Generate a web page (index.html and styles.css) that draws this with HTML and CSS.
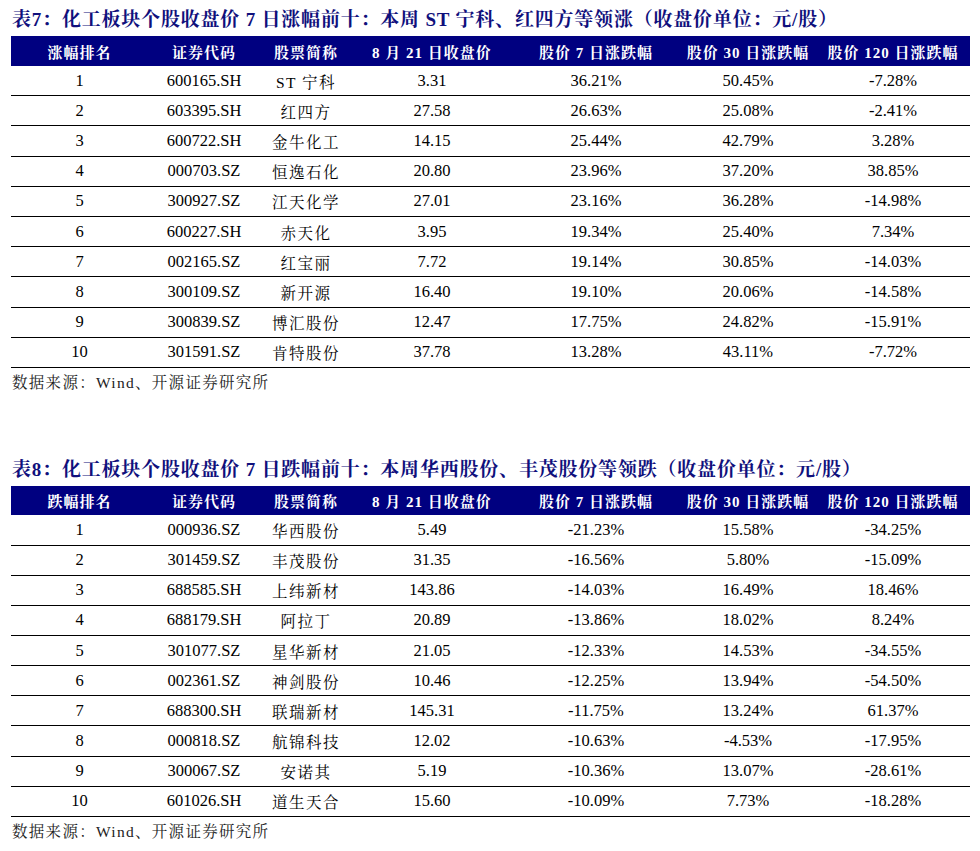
FILE: index.html
```html
<!DOCTYPE html>
<html lang="zh-CN">
<head>
<meta charset="utf-8">
<title>化工板块个股收盘价</title>
<link rel="stylesheet" href="styles.css">
</head>
<body>
<div class="page">
  <section class="block first">
    <h2 class="title">表7：化工板块个股收盘价 7 日涨幅前十：本周 ST 宁科、红四方等领涨（收盘价单位：元/股）</h2>
    <div class="table">
      <div class="row head">
        <div class="cell">涨幅排名</div><div class="cell">证券代码</div><div class="cell">股票简称</div><div class="cell">8 月 21 日收盘价</div><div class="cell">股价 7 日涨跌幅</div><div class="cell">股价 30 日涨跌幅</div><div class="cell">股价 120 日涨跌幅</div>
      </div>
      <div class="row"><div class="cell">1</div><div class="cell">600165.SH</div><div class="cell cn">ST 宁科</div><div class="cell">3.31</div><div class="cell">36.21%</div><div class="cell">50.45%</div><div class="cell">-7.28%</div></div>
      <div class="row"><div class="cell">2</div><div class="cell">603395.SH</div><div class="cell cn">红四方</div><div class="cell">27.58</div><div class="cell">26.63%</div><div class="cell">25.08%</div><div class="cell">-2.41%</div></div>
      <div class="row"><div class="cell">3</div><div class="cell">600722.SH</div><div class="cell cn">金牛化工</div><div class="cell">14.15</div><div class="cell">25.44%</div><div class="cell">42.79%</div><div class="cell">3.28%</div></div>
      <div class="row"><div class="cell">4</div><div class="cell">000703.SZ</div><div class="cell cn">恒逸石化</div><div class="cell">20.80</div><div class="cell">23.96%</div><div class="cell">37.20%</div><div class="cell">38.85%</div></div>
      <div class="row"><div class="cell">5</div><div class="cell">300927.SZ</div><div class="cell cn">江天化学</div><div class="cell">27.01</div><div class="cell">23.16%</div><div class="cell">36.28%</div><div class="cell">-14.98%</div></div>
      <div class="row"><div class="cell">6</div><div class="cell">600227.SH</div><div class="cell cn">赤天化</div><div class="cell">3.95</div><div class="cell">19.34%</div><div class="cell">25.40%</div><div class="cell">7.34%</div></div>
      <div class="row"><div class="cell">7</div><div class="cell">002165.SZ</div><div class="cell cn">红宝丽</div><div class="cell">7.72</div><div class="cell">19.14%</div><div class="cell">30.85%</div><div class="cell">-14.03%</div></div>
      <div class="row"><div class="cell">8</div><div class="cell">300109.SZ</div><div class="cell cn">新开源</div><div class="cell">16.40</div><div class="cell">19.10%</div><div class="cell">20.06%</div><div class="cell">-14.58%</div></div>
      <div class="row"><div class="cell">9</div><div class="cell">300839.SZ</div><div class="cell cn">博汇股份</div><div class="cell">12.47</div><div class="cell">17.75%</div><div class="cell">24.82%</div><div class="cell">-15.91%</div></div>
      <div class="row"><div class="cell">10</div><div class="cell">301591.SZ</div><div class="cell cn">肯特股份</div><div class="cell">37.78</div><div class="cell">13.28%</div><div class="cell">43.11%</div><div class="cell">-7.72%</div></div>
    </div>
    <p class="source">数据来源：Wind、开源证券研究所</p>
  </section>

  <section class="block second">
    <h2 class="title">表8：化工板块个股收盘价 7 日跌幅前十：本周华西股份、丰茂股份等领跌（收盘价单位：元/股）</h2>
    <div class="table">
      <div class="row head">
        <div class="cell">跌幅排名</div><div class="cell">证券代码</div><div class="cell">股票简称</div><div class="cell">8 月 21 日收盘价</div><div class="cell">股价 7 日涨跌幅</div><div class="cell">股价 30 日涨跌幅</div><div class="cell">股价 120 日涨跌幅</div>
      </div>
      <div class="row"><div class="cell">1</div><div class="cell">000936.SZ</div><div class="cell cn">华西股份</div><div class="cell">5.49</div><div class="cell">-21.23%</div><div class="cell">15.58%</div><div class="cell">-34.25%</div></div>
      <div class="row"><div class="cell">2</div><div class="cell">301459.SZ</div><div class="cell cn">丰茂股份</div><div class="cell">31.35</div><div class="cell">-16.56%</div><div class="cell">5.80%</div><div class="cell">-15.09%</div></div>
      <div class="row"><div class="cell">3</div><div class="cell">688585.SH</div><div class="cell cn">上纬新材</div><div class="cell">143.86</div><div class="cell">-14.03%</div><div class="cell">16.49%</div><div class="cell">18.46%</div></div>
      <div class="row"><div class="cell">4</div><div class="cell">688179.SH</div><div class="cell cn">阿拉丁</div><div class="cell">20.89</div><div class="cell">-13.86%</div><div class="cell">18.02%</div><div class="cell">8.24%</div></div>
      <div class="row"><div class="cell">5</div><div class="cell">301077.SZ</div><div class="cell cn">星华新材</div><div class="cell">21.05</div><div class="cell">-12.33%</div><div class="cell">14.53%</div><div class="cell">-34.55%</div></div>
      <div class="row"><div class="cell">6</div><div class="cell">002361.SZ</div><div class="cell cn">神剑股份</div><div class="cell">10.46</div><div class="cell">-12.25%</div><div class="cell">13.94%</div><div class="cell">-54.50%</div></div>
      <div class="row"><div class="cell">7</div><div class="cell">688300.SH</div><div class="cell cn">联瑞新材</div><div class="cell">145.31</div><div class="cell">-11.75%</div><div class="cell">13.24%</div><div class="cell">61.37%</div></div>
      <div class="row"><div class="cell">8</div><div class="cell">000818.SZ</div><div class="cell cn">航锦科技</div><div class="cell">12.02</div><div class="cell">-10.63%</div><div class="cell">-4.53%</div><div class="cell">-17.95%</div></div>
      <div class="row"><div class="cell">9</div><div class="cell">300067.SZ</div><div class="cell cn">安诺其</div><div class="cell">5.19</div><div class="cell">-10.36%</div><div class="cell">13.07%</div><div class="cell">-28.61%</div></div>
      <div class="row"><div class="cell">10</div><div class="cell">601026.SH</div><div class="cell cn">道生天合</div><div class="cell">15.60</div><div class="cell">-10.09%</div><div class="cell">7.73%</div><div class="cell">-18.28%</div></div>
    </div>
    <p class="source">数据来源：Wind、开源证券研究所</p>
  </section>
</div>
</body>
</html>
```

FILE: styles.css
```css
html, body {
  margin: 0;
  padding: 0;
  background: #ffffff;
}

body {
  font-family: "Liberation Serif", "Noto Serif CJK SC", "Noto Sans CJK SC", serif;
  color: #000000;
}

.page {
  width: 959px;
  padding: 7px 10px 0 11px;
}

.block.second {
  margin-top: 59px;
}

.title {
  margin: 0 0 3px 1px;
  font-size: 19px;
  line-height: 26px;
  height: 26px;
  font-weight: bold;
  color: #10107c;
  letter-spacing: 0.8px;
  white-space: nowrap;
}

.table {
  width: 959px;
}

.row {
  display: grid;
  grid-template-columns: 137px 112px 92px 160px 168px 136px 154px;
  height: 30.2px;
  box-sizing: border-box;
  border-bottom: 1px solid #000000;
  align-items: center;
  font-size: 16.5px;
}

.second .row {
  height: 30.15px;
}

.row.head {
  height: 30px;
  border-bottom: none;
  background: #000080;
  color: #ffffff;
  font-size: 15px;
  font-weight: bold;
  letter-spacing: 1px;
}

.second .row.head {
  height: 29.5px;
}

.cell {
  text-align: center;
  white-space: nowrap;
}

.cell.cn {
  font-size: 15.5px;
  letter-spacing: 1.5px;
}

.source {
  margin: 0 0 0 1px;
  font-size: 15.5px;
  line-height: 30px;
  height: 30px;
  letter-spacing: 1.3px;
  color: #222222;
}
```
